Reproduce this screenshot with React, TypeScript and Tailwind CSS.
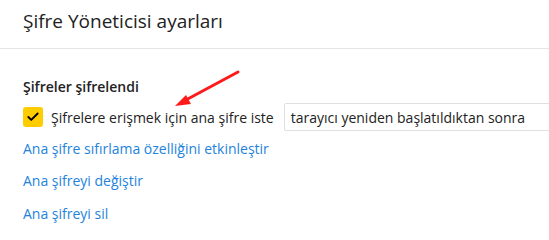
import { Check } from 'lucide-react'

const font = { fontFamily: '"Segoe UI", "Open Sans", "Noto Sans", sans-serif' }

export default function App() {
  return (
    <div className="relative w-[549px] h-[239px] overflow-hidden bg-white text-[#1f1f1f]" style={font}>
      <div className="h-[49px] border-b border-[#e5e5e5] pl-[23px] pt-[8px]">
        <h1 className="text-[19px] leading-[26px] font-normal text-[#222]">Şifre Yöneticisi ayarları</h1>
      </div>

      <div className="pl-[23px] pt-[28px]">
        <h2 className="text-[14px] leading-[20px] font-semibold text-[#222]">Şifreler şifrelendi</h2>

        <div className="mt-[6px] flex items-center h-[28px] whitespace-nowrap">
          <span className="w-[20px] h-[20px] shrink-0 rounded-[3px] bg-[#ffcc00] flex items-center justify-center">
            <Check size={14} strokeWidth={3.25} className="text-black" />
          </span>
          <span className="ml-[8px] text-[14px] text-[#222]">Şifrelere erişmek için ana şifre iste</span>
          <div className="ml-[10px] h-[28px] w-[300px] shrink-0 border border-[#e0e0e0] rounded-[2px] pl-[6px] flex items-center text-[14px] text-[#222]">
            tarayıcı yeniden başlatıldıktan sonra
          </div>
        </div>

        <div className="mt-[1px] flex flex-col text-[14px] text-[#2383dc]">
          <a className="h-[32.5px] flex items-center">Ana şifre sıfırlama özelliğini etkinleştir</a>
          <a className="h-[32.5px] flex items-center">Ana şifreyi değiştir</a>
          <a className="h-[32.5px] flex items-center">Ana şifreyi sil</a>
        </div>
      </div>

      <svg className="absolute left-0 top-0" width="549" height="239" viewBox="0 0 549 239">
        <line x1="238" y1="72" x2="184" y2="101" stroke="#ff1a1a" strokeWidth="3" strokeLinecap="round" />
        <polygon points="175,106 186,95 191,104" fill="#ff1a1a" />
      </svg>
    </div>
  )
}
